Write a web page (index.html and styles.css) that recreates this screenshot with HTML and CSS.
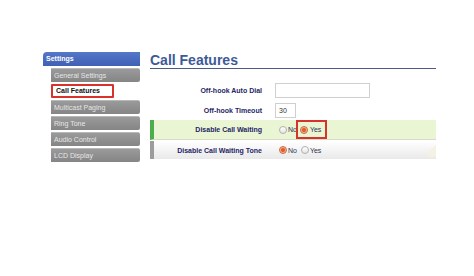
FILE: index.html
```html
<!DOCTYPE html>
<html lang="en">
<head>
    <meta charset="UTF-8">
    <meta name="viewport" content="width=device-width, initial-scale=1.0">
    <title>Call Features</title>
    <link rel="stylesheet" href="styles.css">
</head>
<body>
    <div class="page">
        <div class="sidebar">
            <div class="side-head">Settings</div>
            <div class="side-menu">
                <div class="side-item">General Settings</div>
                <div class="side-item active">Call Features</div>
                <div class="side-item">Multicast Paging</div>
                <div class="side-item">Ring Tone</div>
                <div class="side-item">Audio Control</div>
                <div class="side-item">LCD Display</div>
            </div>
        </div>
        <div class="main">
            <div class="title">Call Features</div>
            <div class="form">
                <div class="row">
                    <div class="label">Off-hook Auto Dial</div>
                    <div class="field"><span class="text-box wide"></span></div>
                </div>
                <div class="row">
                    <div class="label">Off-hook Timeout</div>
                    <div class="field"><span class="text-box short">30</span></div>
                </div>
                <div class="row row-green">
                    <div class="label">Disable Call Waiting</div>
                    <div class="field">
                        <span class="radio"></span><span class="opt">No</span>
                        <span class="mark"><span class="radio on"></span><span class="opt">Yes</span></span>
                    </div>
                </div>
                <div class="row row-grey">
                    <div class="label">Disable Call Waiting Tone</div>
                    <div class="field">
                        <span class="radio on"></span><span class="opt">No</span>
                        <span class="radio"></span><span class="opt">Yes</span>
                    </div>
                    <span class="notch"></span>
                </div>
            </div>
        </div>
    </div>
</body>
</html>
```

FILE: styles.css
```css
body {
    margin: 0;
    background: #ffffff;
    font-family: "Liberation Sans", Arial, sans-serif;
}

.page {
    display: flex;
    gap: 10px;
    padding: 52px 0 0 43px;
}

/* left menu */
.sidebar {
    width: 97px;
}

.side-head {
    height: 14px;
    line-height: 14px;
    padding-left: 3px;
    background: linear-gradient(#5577c8, #3f60b4);
    border-radius: 4px 0 0 0;
    color: #ffffff;
    font-size: 7px;
    font-weight: bold;
}

.side-menu {
    display: flex;
    flex-direction: column;
    gap: 2px;
    margin-top: 2px;
    padding-left: 8px;
}

.side-item {
    height: 14px;
    line-height: 14px;
    padding-left: 3px;
    background: linear-gradient(#9a9a9a, #858585);
    border-top: 1px solid #b8b8b8;
    box-sizing: border-box;
    border-radius: 0 2px 2px 0;
    color: #e6e6e6;
    font-size: 7px;
}

.side-item.active {
    width: 63px;
    line-height: 10px;
    background: #ffffff;
    border: 2px solid #d8322c;
    border-radius: 1px;
    color: #111111;
    font-weight: bold;
}

/* content */
.main {
    width: 286px;
}

.title {
    height: 16px;
    line-height: 16px;
    font-size: 14px;
    font-weight: bold;
    color: #3d5a98;
    border-bottom: 1.5px solid #4c5b82;
}

.form {
    margin-top: 11px;
}

.row {
    position: relative;
    display: flex;
    align-items: center;
    height: 20px;
}

.label {
    width: 112px;
    text-align: right;
    font-size: 7px;
    font-weight: bold;
    color: #1f1f66;
}

.field {
    display: flex;
    align-items: center;
    margin-left: 13px;
    font-size: 7px;
    color: #2e3350;
}

.text-box {
    display: block;
    height: 15px;
    line-height: 13px;
    box-sizing: border-box;
    border: 1px solid #cfcfcf;
    padding-left: 3px;
    background: #ffffff;
    color: #333333;
}

.text-box.wide {
    width: 95px;
}

.text-box.short {
    width: 21px;
}

.row-green {
    height: 19px;
    background: #eaf5d4;
    border-left: 4px solid #4cad4c;
    border-bottom: 1px solid #d6dcc8;
}

.row-green .label,
.row-grey .label {
    width: 108px;
}

.row-grey {
    height: 18px;
    margin-top: 1px;
    background: linear-gradient(#ffffff, #e9e9e9);
    border-left: 4px solid #9c9c9c;
}

.radio {
    width: 6px;
    height: 6px;
    margin: 0 1px 0 4px;
    border: 1px solid #b0b0b0;
    border-radius: 50%;
    background: linear-gradient(#ffffff, #e4e4e4);
}

.radio.on {
    border-color: #c9693f;
    background: radial-gradient(circle, #e2602e 0 40%, #f4ad8e 55%, #f8d2c2 100%);
}

.mark {
    display: flex;
    align-items: center;
    height: 19px;
    box-sizing: border-box;
    padding: 0 4px 0 1px;
    border: 2px solid #d8322c;
    margin-left: -1px;
}

.mark .radio {
    margin-left: 1px;
    margin-right: 2px;
}

.notch {
    position: absolute;
    right: 0;
    top: -2px;
    width: 8px;
    height: 18px;
    background: linear-gradient(135deg, transparent 50%, #f6f1df 50%);
    opacity: 0.8;
}
```
